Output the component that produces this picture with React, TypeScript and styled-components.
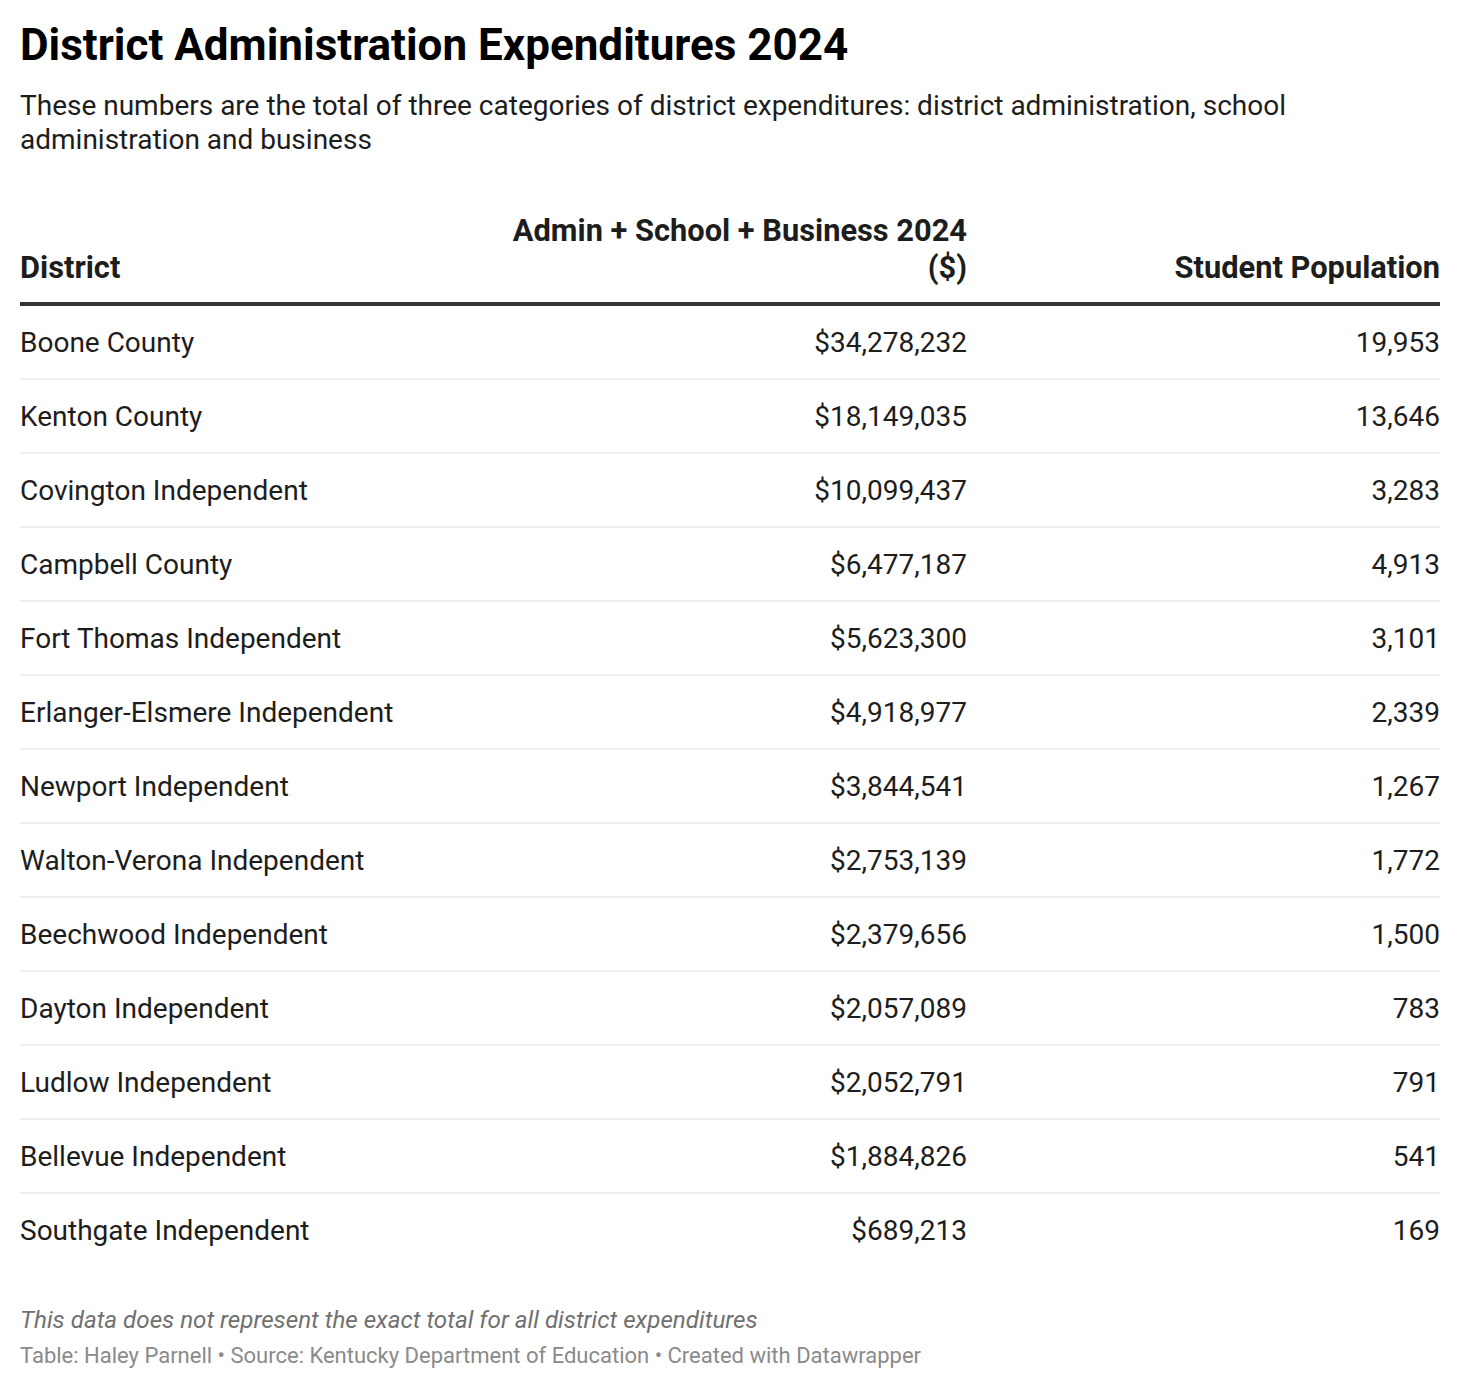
import React from "react";
import styled, { createGlobalStyle } from "styled-components";

const GlobalStyle = createGlobalStyle`
  html, body {
    margin: 0;
    padding: 0;
    background: #ffffff;
  }
  body {
    font-family: Roboto, "Liberation Sans", Arial, sans-serif;
    color: #1d1d1d;
  }
`;

type Row = { district: string; spend: string; students: string };

const rows: Row[] = [
  { district: "Boone County", spend: "$34,278,232", students: "19,953" },
  { district: "Kenton County", spend: "$18,149,035", students: "13,646" },
  { district: "Covington Independent", spend: "$10,099,437", students: "3,283" },
  { district: "Campbell County", spend: "$6,477,187", students: "4,913" },
  { district: "Fort Thomas Independent", spend: "$5,623,300", students: "3,101" },
  { district: "Erlanger-Elsmere Independent", spend: "$4,918,977", students: "2,339" },
  { district: "Newport Independent", spend: "$3,844,541", students: "1,267" },
  { district: "Walton-Verona Independent", spend: "$2,753,139", students: "1,772" },
  { district: "Beechwood Independent", spend: "$2,379,656", students: "1,500" },
  { district: "Dayton Independent", spend: "$2,057,089", students: "783" },
  { district: "Ludlow Independent", spend: "$2,052,791", students: "791" },
  { district: "Bellevue Independent", spend: "$1,884,826", students: "541" },
  { district: "Southgate Independent", spend: "$689,213", students: "169" },
];

const App = () => {
  return (
    <Page>
      <GlobalStyle />
      <Title>District Administration Expenditures 2024</Title>
      <Subtitle>
        These numbers are the total of three categories of district
        expenditures: district administration, school administration and
        business
      </Subtitle>
      <Table>
        <HeadRow>
          <HeadCell>District</HeadCell>
          <HeadCell $right>
            Admin + School + Business 2024
            <br />
            ($)
          </HeadCell>
          <HeadCell $right>Student Population</HeadCell>
        </HeadRow>
        {rows.map((r, i) => (
          <BodyRow key={r.district} $last={i === rows.length - 1}>
            <Cell>{r.district}</Cell>
            <Cell $right>{r.spend}</Cell>
            <Cell $right>{r.students}</Cell>
          </BodyRow>
        ))}
      </Table>
      <Notes>
        This data does not represent the exact total for all district
        expenditures
      </Notes>
      <Byline>
        Table: Haley Parnell • Source: Kentucky Department of Education •
        Created with Datawrapper
      </Byline>
    </Page>
  );
};

export default App;

const Page = styled.div`
  width: 1420px;
  padding: 20px 20px 0 20px;
`;

const Title = styled.h1`
  margin: 0;
  font-size: 44px;
  line-height: 50px;
  font-weight: 700;
  color: #000;
`;

const Subtitle = styled.p`
  margin: 19px 0 0 0;
  font-size: 28px;
  line-height: 34px;
  color: #1d1d1d;
`;

const Table = styled.div`
  margin-top: 55px;
  display: grid;
  grid-template-columns: 1fr 520px 473px;
`;

const HeadRow = styled.div`
  display: contents;
`;

const HeadCell = styled.div<{ $right?: boolean }>`
  display: flex;
  align-items: flex-end;
  justify-content: ${(p) => (p.$right ? "flex-end" : "flex-start")};
  text-align: ${(p) => (p.$right ? "right" : "left")};
  font-size: 30.8px;
  font-weight: 700;
  line-height: 37px;
  color: #1d1d1d;
  padding-bottom: 16px;
  border-bottom: 4px solid #333;
`;

const BodyRow = styled.div<{ $last?: boolean }>`
  display: contents;
  & > div {
    border-bottom: ${(p) => (p.$last ? "none" : "2px solid #eeeeee")};
  }
`;

const Cell = styled.div<{ $right?: boolean }>`
  height: 72px;
  display: flex;
  align-items: center;
  justify-content: ${(p) => (p.$right ? "flex-end" : "flex-start")};
  font-size: 28px;
  color: #1d1d1d;
`;

const Notes = styled.p`
  margin: 39px 0 0 0;
  font-size: 24.2px;
  line-height: 30px;
  font-style: italic;
  color: #707070;
`;

const Byline = styled.p`
  margin: 6px 0 0 0;
  font-size: 22px;
  line-height: 30px;
  color: #8a8a8a;
`;
